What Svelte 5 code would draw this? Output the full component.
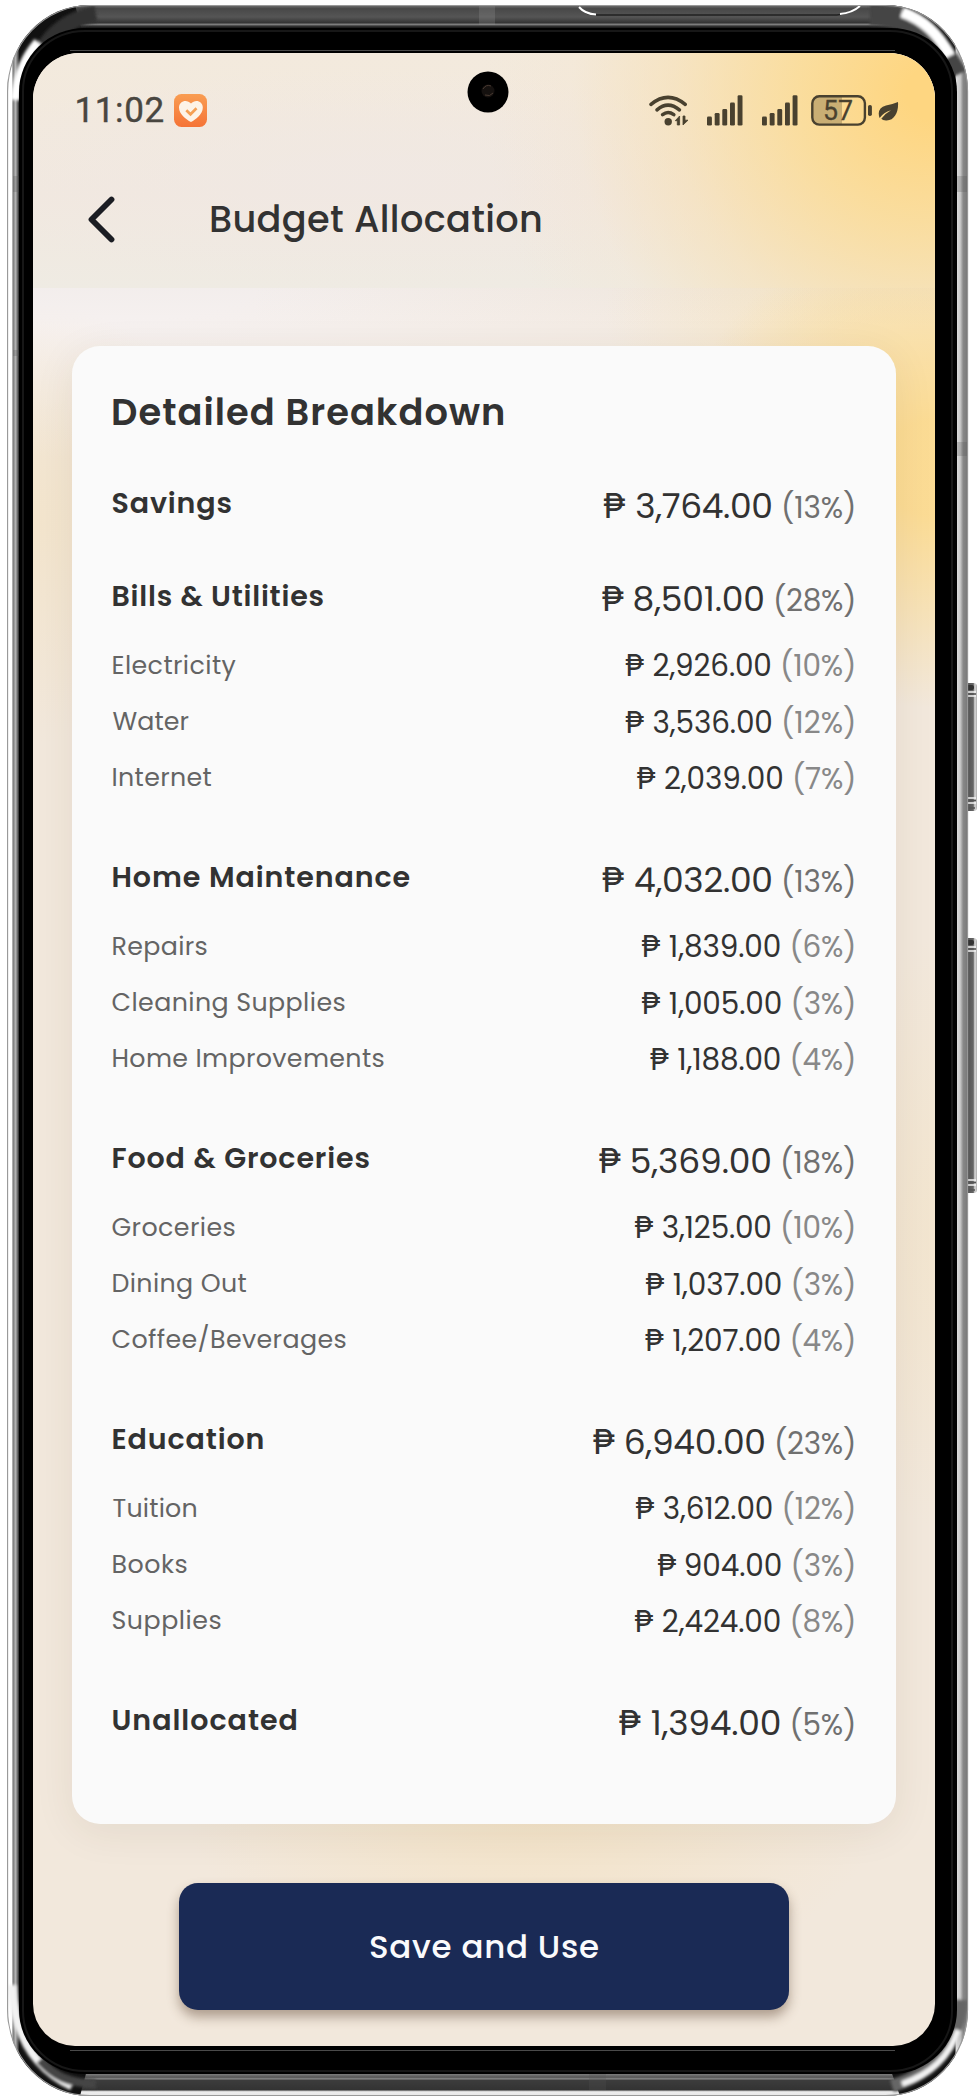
<script>
  // n: width of the amount, p: width of the percentage
  const sections = [
    { name: 'Savings', w: 119, amount: '3,764.00', pct: '(13%)', n: 135, p: 70, items: [] },
    {
      name: 'Bills & Utilities', w: 211, amount: '8,501.00', pct: '(28%)', n: 128.7, p: 78,
      items: [
        { name: 'Electricity', w: 123, amount: '2,926.00', pct: '(10%)', n: 116.7, p: 71 },
        { name: 'Water', w: 76, amount: '3,536.00', pct: '(12%)', n: 117.7, p: 70 },
        { name: 'Internet', w: 99, amount: '2,039.00', pct: '(7%)', n: 117.3, p: 59 }
      ]
    },
    {
      name: 'Home Maintenance', w: 297, amount: '4,032.00', pct: '(13%)', n: 136.3, p: 70,
      items: [
        { name: 'Repairs', w: 94, amount: '1,839.00', pct: '(6%)', n: 110, p: 61.5 },
        { name: 'Cleaning Supplies', w: 232, amount: '1,005.00', pct: '(3%)', n: 111, p: 60.5 },
        { name: 'Home Improvements', w: 271, amount: '1,188.00', pct: '(4%)', n: 101.5, p: 61.5 }
      ]
    },
    {
      name: 'Food & Groceries', w: 257, amount: '5,369.00', pct: '(18%)', n: 138.5, p: 71,
      items: [
        { name: 'Groceries', w: 122, amount: '3,125.00', pct: '(10%)', n: 107.5, p: 71 },
        { name: 'Dining Out', w: 134, amount: '1,037.00', pct: '(3%)', n: 107, p: 60.5 },
        { name: 'Coffee/Beverages', w: 233, amount: '1,207.00', pct: '(4%)', n: 106.5, p: 61.5 }
      ]
    },
    {
      name: 'Education', w: 151, amount: '6,940.00', pct: '(23%)', n: 138.5, p: 77,
      items: [
        { name: 'Tuition', w: 84, amount: '3,612.00', pct: '(12%)', n: 108, p: 69.5 },
        { name: 'Books', w: 74, amount: '904.00', pct: '(3%)', n: 95, p: 60.5 },
        { name: 'Supplies', w: 108, amount: '2,424.00', pct: '(8%)', n: 117, p: 61.5 }
      ]
    },
    { name: 'Unallocated', w: 184, amount: '1,394.00', pct: '(5%)', n: 128, p: 61.5, items: [] }
  ];

  const bars = [
    { x: 0, h: 9 }, { x: 7.7, h: 12.7 }, { x: 15.3, h: 16.5 }, { x: 23, h: 23 }, { x: 30.6, h: 30.3 }
  ];

  // Tracks a line of text so that its ink is exactly `width` wide.
  function fit(node, width) {
    const cs = getComputedStyle(node);
    const ctx = document.createElement('canvas').getContext('2d');
    ctx.font = `${cs.fontWeight} ${cs.fontSize} ${cs.fontFamily}`;
    const text = node.textContent;
    const m = ctx.measureText(text);
    const left = -m.actualBoundingBoxLeft;
    const right = m.width - m.actualBoundingBoxRight;
    const ink = node.getBoundingClientRect().width - left - right;
    const ls = (width - ink) / (text.length - 1);
    node.style.letterSpacing = `${ls}px`;
    node.style.marginLeft = `${-left}px`;
    node.style.marginRight = `${-(right + ls)}px`;
  }
</script>

{#snippet signal()}
  <svg class="signal" width="36" height="31" viewBox="0 0 36 31">
    {#each bars as b}
      <rect x={b.x} y={30.6 - b.h} width="4.9" height={b.h} rx="1.3" />
    {/each}
  </svg>
{/snippet}

{#snippet money(row)}
  <span class="money">
    <span class="peso">₱</span>
    <span class="num" use:fit={row.n}>{row.amount}</span>
    <span class="pct" use:fit={row.p}>{row.pct}</span>
  </span>
{/snippet}

<div class="stage">
  <svg class="frame" width="978" height="2100" viewBox="0 0 978 2100">
    <defs>
      <linearGradient id="side" x1="0" x2="1" y1="0" y2="0">
        <stop offset="0" stop-color="#999" /><stop offset=".0015" stop-color="#fff" />
        <stop offset=".005" stop-color="#fff" /><stop offset=".0062" stop-color="#777" />
        <stop offset=".009" stop-color="#b5b5b5" /><stop offset=".0115" stop-color="#555" />
        <stop offset=".013" stop-color="#111" /><stop offset=".986" stop-color="#111" />
        <stop offset=".988" stop-color="#ddd" /><stop offset=".992" stop-color="#c8c8c8" />
        <stop offset=".995" stop-color="#888" /><stop offset="1" stop-color="#777" />
      </linearGradient>
      <linearGradient id="top" x1="0" x2="0" y1="5" y2="29" gradientUnits="userSpaceOnUse">
        <stop offset="0" stop-color="#777" /><stop offset=".15" stop-color="#484848" />
        <stop offset=".5" stop-color="#555" /><stop offset=".75" stop-color="#333" />
        <stop offset=".8" stop-color="#8a8a8a" /><stop offset=".88" stop-color="#333" />
        <stop offset="1" stop-color="#050505" />
      </linearGradient>
      <linearGradient id="bot" x1="0" x2="0" y1="2071" y2="2096" gradientUnits="userSpaceOnUse">
        <stop offset="0" stop-color="#080808" /><stop offset=".14" stop-color="#777" />
        <stop offset=".25" stop-color="#555" /><stop offset=".31" stop-color="#858585" />
        <stop offset=".38" stop-color="#3c3c3c" /><stop offset=".75" stop-color="#333" />
        <stop offset=".83" stop-color="#eee" /><stop offset=".96" stop-color="#e8e8e8" />
        <stop offset="1" stop-color="#999" />
      </linearGradient>
      <linearGradient id="key" x1="0" x2="1" y1="0" y2="0">
        <stop offset="0" stop-color="#999" /><stop offset=".2" stop-color="#c4c4c4" />
        <stop offset=".4" stop-color="#555" /><stop offset=".75" stop-color="#666" />
        <stop offset=".86" stop-color="#ddd" /><stop offset="1" stop-color="#aaa" />
      </linearGradient>
      <filter id="soft" x="-20%" y="-20%" width="140%" height="140%"><feGaussianBlur stdDeviation="1.5" /></filter>
      <clipPath id="body"><rect x="7" y="5" width="961" height="2091" rx="82" ry="86" /></clipPath>
    </defs>
    {#each [{ y: 683, h: 128 }, { y: 938, h: 255 }] as k}
      <rect x="962" y={k.y} width="15" height={k.h} rx="3.5" fill="url(#key)" />
      <rect x="965" y={k.y + 2} width="9" height="5" rx="2" fill="#333" />
      <path d="M963 {k.y + 9}h13M963 {k.y + 13}h13M963 {k.y + k.h - 13}h13M963 {k.y + k.h - 8}h13" stroke="#f3f3f3" stroke-width="1.6" />
      <path d="M963 {k.y + 11}h13M963 {k.y + k.h - 10.5}h13M963 {k.y + k.h - 3}h12" stroke="#555" stroke-width="1.4" />
    {/each}
    <g clip-path="url(#body)">
      <rect x="7" y="5" width="961" height="2091" fill="url(#side)" />
      <path d="M75 5H905L885 60H90Z" fill="url(#top)" />
      <path d="M80 2096H900L880 2040H95Z" fill="url(#bot)" />
      <g fill="none" filter="url(#soft)">
        <path d="M28 88C38 42 62 20 96 14" stroke="#333" stroke-width="16" />
        <path d="M15 100C18 72 26 56 38 42" stroke="#fff" stroke-width="9" />
        <path d="M870 15C910 16 940 38 957 75" stroke="#444" stroke-width="20" />
        <path d="M902 12C925 20 940 36 950 56" stroke="#fff" stroke-width="11" />
        <path d="M12 1985C14 2030 30 2066 72 2086" stroke="#f2f2f2" stroke-width="9" />
        <path d="M40 2060C54 2076 68 2083 96 2084" stroke="#444" stroke-width="9" />
        <path d="M962 2000C958 2042 938 2072 892 2086" stroke="#666" stroke-width="13" />
        <path d="M958 2030C950 2056 932 2074 902 2084" stroke="#f3f3f3" stroke-width="6" />
      </g>
      <g fill="#555" opacity=".25">
        <rect x="479" y="5" width="16" height="20" fill="#999" /><rect x="955" y="176" width="13" height="16" />
        <rect x="957" y="442" width="11" height="14" /><rect x="13" y="176" width="7" height="16" />
        <rect x="13" y="350" width="7" height="6" /><rect x="589" y="2073" width="17" height="17" />
      </g>
      <path d="M579 7q6 8 18 8h240q12-1 23-9" fill="none" stroke="#222" stroke-width="1.5" />
      <path d="M579 7q6 7 17 7.500M840 14q12-1 20-8" fill="none" stroke="#fff" stroke-width="2" />
    </g>
    <rect x="7.600" y="5.500" width="960" height="2090" rx="82" ry="86" fill="none" stroke="#999" stroke-width="1.1" />
    <rect x="19" y="28" width="938" height="2046" rx="66" ry="64" fill="#000" />
    <rect x="23" y="31" width="929" height="2040" rx="62" ry="60" fill="none" stroke="#171717" stroke-width="2" />
    <path d="M70 50.500H895M70 2050.500H895" stroke="#4a4a4a" stroke-width="1" />
  </svg>

  <div class="screen">
    <header>
      <div class="status">
        <div class="clock">
          <span class="time" use:fit={87}>11:02</span>
          <svg width="33" height="33" viewBox="0 0 33 33">
            <defs>
              <linearGradient id="app-icon" x1="0" x2="0" y1="0" y2="1">
                <stop offset="0" stop-color="#f99d52" /><stop offset="1" stop-color="#f57336" />
              </linearGradient>
            </defs>
            <rect width="33" height="33" rx="7.500" fill="url(#app-icon)" />
            <path d="M17 28C12 25.500 5 20 5 13.500C5 6.800 13 4.800 17 9.500C21 4.800 28.800 6.800 28.800 13.500C28.800 20 22 25.500 17 28Z" fill="#fdf3e7" />
            <path d="M12.300 16.300l4.200 4 6-6" fill="none" stroke="#f5a055" stroke-width="2.700" />
          </svg>
        </div>
        <svg class="camera" width="42" height="42" viewBox="0 0 42 42">
          <circle cx="21" cy="21" r="20.500" fill="#000" />
          <circle cx="21" cy="20" r="6.500" fill="#15110f" />
          <path d="M16 18q3-5 8-3M18 24q5 2 8-2" fill="none" stroke="#493a31" stroke-width="1" />
        </svg>
        <div class="icons">
          <svg class="wifi" width="40" height="32" viewBox="0 0 40 32">
            <g fill="none" stroke="#49412f" stroke-width="3.600" stroke-linecap="round">
              <path d="M2 9.300Q19 -4.600 36.200 9.300" />
              <path d="M8 14.900Q19 5.500 30.400 14.900" />
              <path d="M13.600 19.600Q19 15.400 24.800 19.600" />
            </g>
            <circle cx="19.200" cy="26.700" r="3.700" fill="#49412f" />
            <path d="M30.600 21v9h-2.300v-4.300h-2L30.600 21ZM34 30v-9h2v4.200h3L34 30Z" fill="#49412f" stroke="#49412f" stroke-width=".8" />
          </svg>
          {@render signal()}
          {@render signal()}
          <svg class="battery" width="61" height="31" viewBox="0 0 61 31">
            <path d="M8 1.300H31V29.300H8A7 7 0 0 1 1.300 23V8A7 7 0 0 1 8 1.300Z" fill="#c9ae74" />
            <rect x="1.300" y="1.300" width="52.600" height="28.300" rx="7" fill="none" stroke="#49412f" stroke-width="2.400" />
            <rect x="57" y="10" width="3.900" height="11" rx="1.800" fill="#49412f" />
            <text x="27" y="25.200" text-anchor="middle" textLength="30" lengthAdjust="spacingAndGlyphs">57</text>
          </svg>
          <svg class="leaf" width="21" height="21" viewBox="0 0 21 21">
            <path d="M20 1C20.800 11 16.500 20 8 19.500Q4.500 19.300 3.300 17.800Q7 12.600 13 9.300Q5.500 11.500 1.600 17Q-1.800 7.500 8 4.500Q14 3.500 20 1Z" fill="#49412f" />
          </svg>
        </div>
      </div>
      <div class="toolbar">
        <svg width="30" height="48" viewBox="0 0 30 48">
          <path d="M25.500 4.500L5.500 24.500L25.500 44.500" fill="none" stroke="#1b1d23" stroke-width="5.800" stroke-linecap="round" stroke-linejoin="round" />
        </svg>
        <h1><span use:fit={330}>Budget Allocation</span></h1>
      </div>
    </header>

    <main>
      <section class="card">
        <h2><span use:fit={390}>Detailed Breakdown</span></h2>
        {#each sections as s}
          <div class="group" class:open={s.items.length}>
            <div class="row head">
              <span class="name" use:fit={s.w}>{s.name}</span>
              {@render money(s)}
            </div>
            {#each s.items as item}
              <div class="row sub">
                <span class="name" use:fit={item.w}>{item.name}</span>
                {@render money(item)}
              </div>
            {/each}
          </div>
        {/each}
      </section>
      <button><span use:fit={228}>Save and Use</span></button>
    </main>
  </div>
</div>

<style>
  :global(body) { background: #fff; }
  .stage {
    position: relative;
    box-sizing: border-box;
    width: 978px;
    height: 2100px;
    padding: 53px 0 0 33px;
    overflow: hidden;
    font-family: Poppins, Inter, sans-serif;
    color: #323232;
    white-space: nowrap;
  }
  .frame { position: absolute; inset: 0; }
  .screen {
    position: relative;
    width: 902px;
    height: 1993px;
    border-radius: 46px 46px 42px 42px;
    overflow: hidden;
    display: flex;
    flex-direction: column;
    background:
      radial-gradient(ellipse 350px 190px at 500px 1750px, rgba(245, 222, 178, .5), transparent),
      radial-gradient(ellipse 220px 300px at 940px 1180px, rgba(245, 221, 170, .3), transparent),
      radial-gradient(ellipse 200px 220px at 0 470px, rgba(245, 225, 186, .45), transparent),
      radial-gradient(ellipse 260px 240px at 902px 415px, rgba(252, 219, 145, .95) 20%, rgba(250, 222, 160, .6) 60%, transparent),
      radial-gradient(ellipse 330px 200px at 902px 260px, rgba(250, 228, 180, .6) 25%, transparent),
      radial-gradient(ellipse 800px 170px at 60px 235px, #f6f1f0 20%, transparent),
      #f2e8dc;
  }
  header {
    flex: none;
    height: 235px;
    display: flex;
    flex-direction: column;
    background:
      radial-gradient(ellipse 450px 430px at 900px 40px, #fed681 6%, rgba(252, 218, 142, .8) 30%, rgba(249, 222, 170, .5) 58%, rgba(247, 228, 200, .2) 80%, transparent),
      radial-gradient(ellipse 440px 110px at 330px 125px, rgba(240, 232, 229, .7), transparent),
      linear-gradient(#f3eadd, #f1e8df 60%, #efebe3);
  }
  .status { display: flex; height: 106px; }
  .clock { display: flex; width: 434px; padding-top: 41px; }
  .clock svg { margin-left: 10.500px; }
  .time {
    margin-top: -4px;
    line-height: 41px;
    font-family: Roboto, sans-serif;
    font-size: 35px;
    font-weight: 400;
    color: #494640;
    -webkit-text-stroke: .4px #494640;
  }
  .clock::before { content: ''; width: 43.500px; flex: none; }
  .camera { margin-top: 17.500px; }
  .icons { display: flex; padding: 42px 0 0 139.500px; }
  .wifi { margin-right: 18px; flex: none; }
  .signal { margin-right: 19.700px; fill: #49412f; flex: none; }
  .signal + .signal { margin-right: 13px; }
  .battery { margin-right: 6px; flex: none; }
  .battery text { font: 400 28px Roboto, sans-serif; fill: #49412f; stroke: #49412f; stroke-width: .3; }
  .leaf { margin-top: 6px; flex: none; }
  .toolbar { display: flex; align-items: center; padding: 36px 0 0 53px; }
  h1 {
    margin: 0 0 0 95px;
    line-height: 48px;
    font-size: 36.700px;
    font-weight: 500;
  }
  h1 span { position: relative; top: .3px; }
  main { display: flex; flex-direction: column; flex: 1; padding-top: 58px; align-items: flex-start; }
  main::before {
    content: '';
    width: 100%;
    height: 58px;
    margin: -58px 0 0;
    background: linear-gradient(rgba(80, 60, 40, .02), transparent 70%);
  }
  .card {
    box-sizing: border-box;
    width: 824px;
    height: 1478px;
    margin-left: 39px;
    padding: 41px 42px 0 40px;
    border-radius: 28px;
    background: #fafafa;
    box-shadow: 0 8px 40px rgba(70, 50, 20, .08);
  }
  span { display: inline-block; }
  h2 { margin: 0 0 46.200px 1px; line-height: 50px; font-size: 36.800px; font-weight: 600; }
  .group { margin-bottom: 52.700px; }
  .group.open { margin-bottom: 59.700px; }
  .row { display: flex; justify-content: space-between; height: 40px; line-height: 40px; padding-left: .5px; }
  .head .name { font-size: 28.500px; font-weight: 600; }
  .sub { margin-top: 16.200px; }
  .head + .sub { margin-top: 28.900px; }
  .sub .name { font-size: 25.300px; font-weight: 400; color: #646464; }
  .money { display: flex; align-items: baseline; gap: 12.700px; font-size: 34.500px; margin-top: 2.900px; }
  .sub .money { font-size: 29.500px; margin-top: 1.700px; }
  .peso { width: 22px; margin-right: -1.700px; display: flex; justify-content: center; }
  .sub .peso { width: 19px; margin-right: -3.200px; }
  .pct { font-size: 29.500px; color: #707070; }
  .sub .pct { color: #888; }
  button {
    width: 610px;
    height: 127px;
    margin: 59px 0 0 146px;
    padding: 0;
    border: 0;
    border-radius: 19px;
    background: #1a2a55;
    color: #fafafc;
    font-family: inherit;
    font-size: 32.500px;
    font-weight: 500;
    box-shadow: 0 7px 12px rgba(80, 55, 35, .42);
  }
  button span { position: relative; top: .500px; }
</style>
